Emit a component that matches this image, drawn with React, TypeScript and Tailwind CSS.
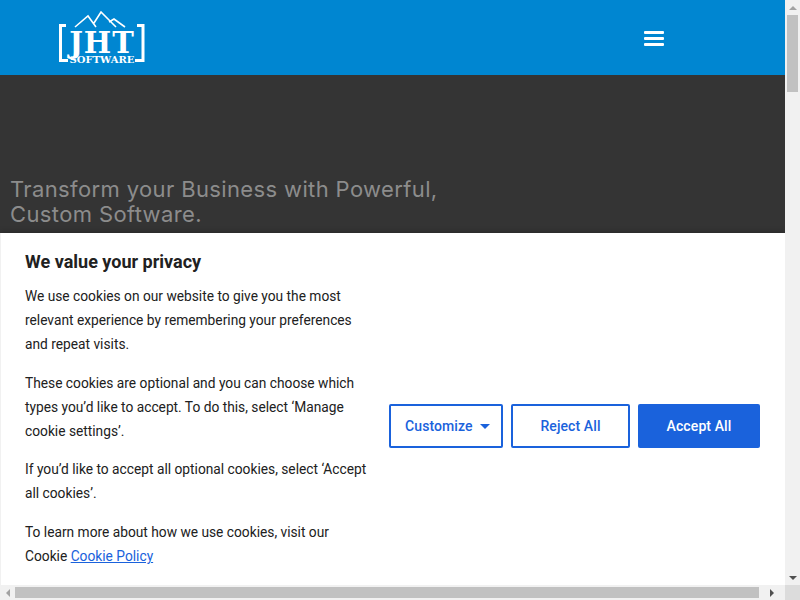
import { Fragment } from "react";

const COOKIE_PARAGRAPHS = [
  ["We use cookies on our website to give you the most", "relevant experience by remembering your preferences", "and repeat visits."],
  ["These cookies are optional and you can choose which", "types you’d like to accept. To do this, select ‘Manage", "cookie settings’."],
  ["If you’d like to accept all optional cookies, select ‘Accept", "all cookies’."],
];

function Logo() {
  return (
    <div className="relative w-[86px] h-[54px] text-white">
      <svg className="absolute left-0 top-0" width="86" height="54" viewBox="0 0 86 54" fill="none" stroke="white">
        {/* mountains */}
        <path d="M16 16 L29 5 L37 16 M35 12 L42 1 L57 16 M50 11 L55 8 L66 16" strokeWidth="1.6" />
        {/* brackets */}
        <path d="M7 14.5 H1.5 V49.5 H9" strokeWidth="3" />
        <path d="M78 14.5 H84 V49.5 H76" strokeWidth="3" />
      </svg>
      <div className="absolute left-0 right-0 top-[22px] text-center font-['DejaVu_Serif',serif] font-bold text-[29px] leading-[20px] tracking-[1px]">
        JHT
      </div>
      <div className="absolute left-0 right-0 top-[44px] text-center font-['DejaVu_Serif',serif] font-bold text-[10px] leading-[9px]">
        SOFTWARE
      </div>
    </div>
  );
}

function CookieBanner() {
  return (
    <div className="absolute left-0 right-0 bottom-0 h-[352px] bg-white border-l border-[#f1f1f1] shadow-[0_0_6px_rgba(0,0,0,0.35)] pl-6 pr-[25px] pt-[17px] font-['Roboto',sans-serif] text-[#212121]">
      <h2 className="text-[18px] leading-6 font-bold">We value your privacy</h2>
      <div className="flex items-center justify-between mt-[10px]">
        <div className="w-[345px] text-[13.75px] leading-6">
          {COOKIE_PARAGRAPHS.map((lines) => (
            <p key={lines[0]} className="mb-[14.7px]">
              {lines.map((line) => (
                <Fragment key={line}>
                  {line}
                  <br />
                </Fragment>
              ))}
            </p>
          ))}
          <p>
            To learn more about how we use cookies, visit our
            <br />
            Cookie{" "}
            <a href="#" className="text-[#1a62dc] underline">
              Cookie Policy
            </a>
          </p>
        </div>
        <div className="flex gap-2 text-[14px] font-medium tracking-[0.1px]">
          <button className="w-[114px] h-11 flex items-center gap-[7px] pl-[14px] border-2 border-[#1a62dc] rounded-[2px] text-[#1a62dc]">
            Customize
            <span className="w-0 h-0 border-x-[5px] border-x-transparent border-t-[5px] border-t-[#1a62dc]" />
          </button>
          <button className="w-[119px] h-11 border-2 border-[#1a62dc] rounded-[2px] text-[#1a62dc]">Reject All</button>
          <button className="w-[122px] h-11 bg-[#1a62dc] rounded-[2px] text-white">Accept All</button>
        </div>
      </div>
    </div>
  );
}

export default function App() {
  return (
    <div className="w-[800px] h-[600px] flex overflow-hidden bg-[#f1f1f1]">
      <div className="w-[785px] flex flex-col">
        <div className="relative h-[585px] flex flex-col overflow-hidden">
          {/* Header */}
          <header className="h-[75px] shrink-0 bg-[#0086d1] flex items-center justify-between pl-[59px] pr-[121px] pt-[1px]">
            <Logo />
            <div className="flex flex-col gap-[3px] w-5">
              <span className="h-[3px] bg-white rounded-[1px]" />
              <span className="h-[3px] bg-white rounded-[1px]" />
              <span className="h-[3px] bg-white rounded-[1px]" />
            </div>
          </header>

          {/* Hero */}
          <section className="flex-1 bg-[#343434] pt-[102px] pl-[10px]">
            <h1 className="font-['Inter',sans-serif] text-[22px] leading-[25px] tracking-[0.37px] text-[#8c8c8c]">
              Transform your Business with Powerful,
              <br />
              Custom Software.
            </h1>
          </section>

          <CookieBanner />
        </div>

        {/* Horizontal scrollbar */}
        <div className="h-[15px] flex items-center bg-[#f1f1f1]">
          <div className="w-[15px] flex justify-center">
            <span className="w-0 h-0 border-y-[4px] border-y-transparent border-r-[4px] border-r-[#a3a3a3]" />
          </div>
          <div className="w-[744px] h-[11px] bg-[#c1c1c1]" />
          <div className="flex-1 flex justify-center">
            <span className="w-0 h-0 border-y-[4px] border-y-transparent border-l-[4px] border-l-[#505050]" />
          </div>
        </div>
      </div>

      {/* Vertical scrollbar */}
      <div className="w-[15px] flex flex-col bg-[#f1f1f1]">
        <div className="h-[15px] flex items-center justify-center">
          <span className="w-0 h-0 border-x-[4px] border-x-transparent border-b-[4px] border-b-[#a3a3a3]" />
        </div>
        <div className="mx-[2px] h-[77px] bg-[#c1c1c1]" />
        <div className="flex-1" />
        <div className="h-[15px] flex items-center justify-center">
          <span className="w-0 h-0 border-x-[4px] border-x-transparent border-t-[4px] border-t-[#505050]" />
        </div>
        <div className="h-[15px] bg-[#dcdcdc]" />
      </div>
    </div>
  );
}
